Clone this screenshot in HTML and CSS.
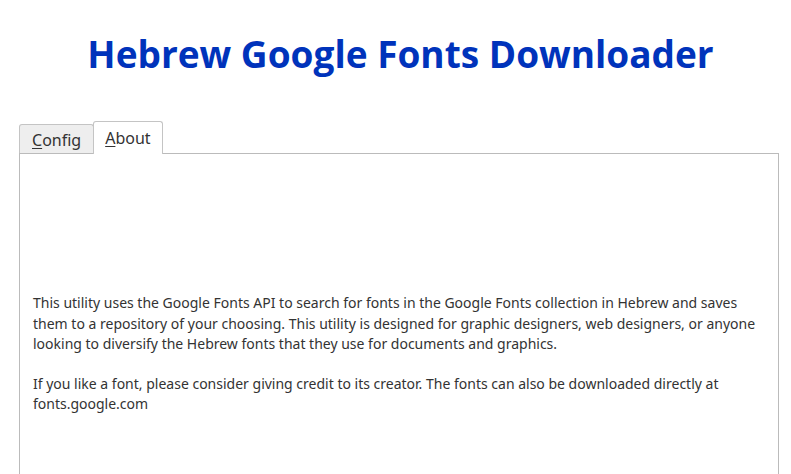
FILE: index.html
```html
<!DOCTYPE html>
<html>
<head>
<meta charset="utf-8">
<link rel="stylesheet" href="styles.css">
</head>
<body>
<h1 class="title">Hebrew Google Fonts Downloader</h1>
<div class="tabs">
  <div class="tab-bar">
    <div class="tab"><span class="u">C</span>onfig</div>
    <div class="tab active"><span class="u">A</span>bout</div>
  </div>
  <div class="panel">
    <p class="about">This utility uses the Google Fonts API to search for fonts in the Google Fonts collection in Hebrew and saves them to a repository of your choosing. This utility is designed for graphic designers, web designers, or anyone looking to diversify the Hebrew fonts that they use for documents and graphics.</p>
    <p class="about">If you like a font, please consider giving credit to its creator. The fonts can also be downloaded directly at fonts.google.com</p>
  </div>
</div>
</body>
</html>
```
FILE: styles.css
```css
html, body {
  margin: 0;
  padding: 0;
  background: #ffffff;
  overflow: hidden;
}
body {
  font-family: "Noto Sans", "Open Sans", sans-serif;
  color: #333333;
  height: 474px;
}
.title {
  margin: 0;
  padding: 28px 0 0 10px;
  height: 121px;
  box-sizing: border-box;
  text-align: center;
  font-family: "Open Sans", "Noto Sans", sans-serif;
  font-weight: 700;
  font-size: 37px;
  line-height: 52px;
  color: #0033bb;
}
.tabs {
  margin: 0 12px 0 19px;
  display: flex;
  flex-direction: column;
}
.tab-bar {
  display: flex;
  align-items: flex-end;
  height: 32px;
}
.tab {
  box-sizing: border-box;
  height: 30px;
  padding: 0 12px;
  background: #eeeeee;
  border: 1px solid #c4c4c4;
  border-bottom: none;
  border-radius: 3px 3px 0 0;
  font-size: 16px;
  line-height: 30px;
  color: #333333;
  margin-bottom: -1px;
}
.tab.active {
  width: 70px;
  padding: 0 0 0 11px;
  height: 33px;
  background: #ffffff;
  position: relative;
  z-index: 1;
  line-height: 32px;
  margin-left: -1px;
}
.u {
  text-decoration: underline;
  text-underline-offset: 2px;
}
.panel {
  border: 1px solid #bbbbbb;
  border-bottom: none;
  height: 330px;
  padding: 139px 5px 0 13px;
  box-sizing: border-box;
  overflow: hidden;
}
.about {
  margin: 0 0 19px 0;
  font-size: 14px;
  line-height: 20.5px;
  color: #333333;
}
```
